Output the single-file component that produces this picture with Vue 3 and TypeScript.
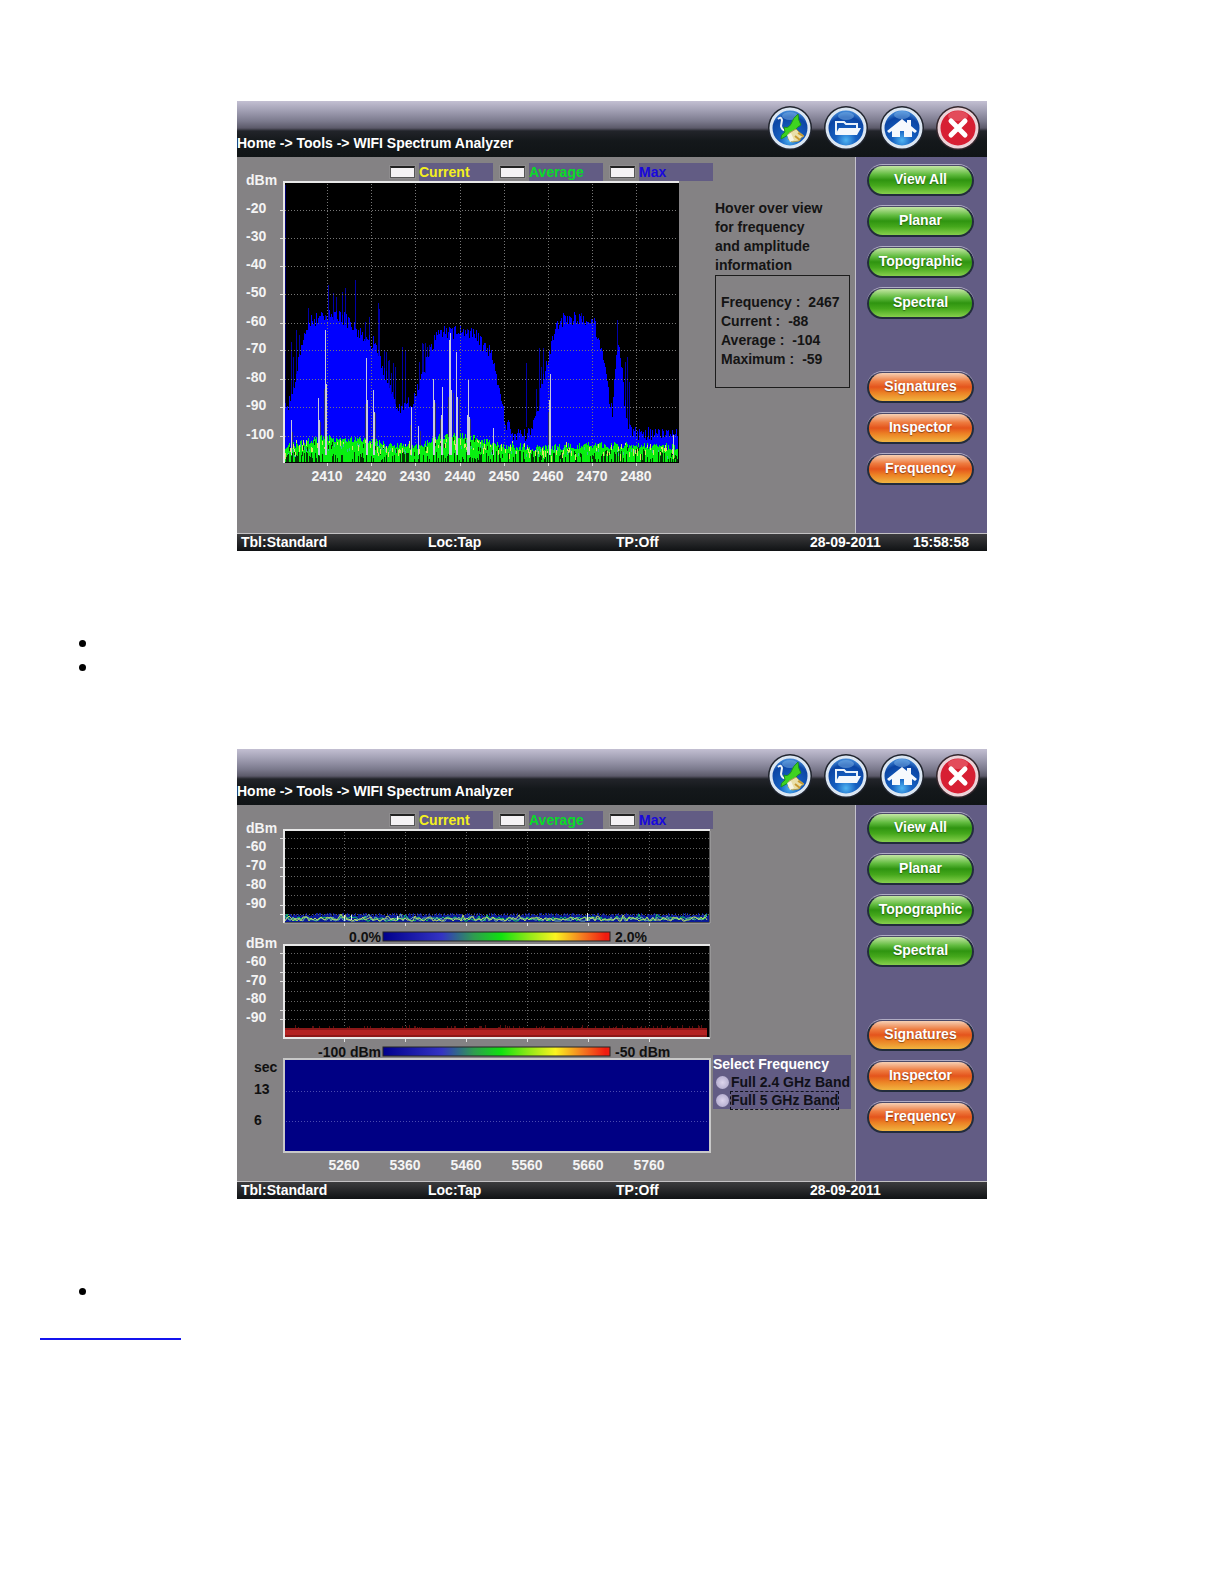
<script setup lang="ts">
interface SideButton {
  label: string
  tone: 'green' | 'orange'
}

interface Tick {
  pos: number
  label: string
}

type Point = [number, number]

const greenButtons: SideButton[] = ['View All', 'Planar', 'Topographic', 'Spectral'].map((label) => ({ label, tone: 'green' }))
const orangeButtons: SideButton[] = ['Signatures', 'Inspector', 'Frequency'].map((label) => ({ label, tone: 'orange' }))

const legend = [
  { name: 'Current', cls: 'current' },
  { name: 'Average', cls: 'average' },
  { name: 'Max', cls: 'max' },
]

const readings = [
  { name: 'Frequency', value: '2467' },
  { name: 'Current', value: '-88' },
  { name: 'Average', value: '-104' },
  { name: 'Maximum', value: '-59' },
]

const screens = [
  { id: 'wide', time: '15:58:58' },
  { id: 'dual', time: '' },
]

/* Small repeatable generator, so the noise floor is stable between renders. */
function makeRandom(seed: number): () => number {
  let s = seed
  return () => {
    s = (s * 1664525 + 1013904223) % 4294967296
    return s / 4294967296
  }
}

function interpolate(points: Point[], x: number): number {
  for (let i = 1; i < points.length; i++) {
    if (x <= points[i][0]) {
      const [x0, y0] = points[i - 1]
      const [x1, y1] = points[i]
      return y0 + ((y1 - y0) * (x - x0)) / (x1 - x0)
    }
  }
  return points[points.length - 1][1]
}

/* 2.4 GHz view */
const bandRows: Tick[] = [53, 81, 109, 137, 166, 193, 222, 250, 279].map((pos, i) => ({ pos, label: String(-20 - i * 10) }))
const bandCols: Tick[] = [90, 134, 178, 223, 267, 311, 355, 399].map((pos, i) => ({ pos, label: String(2410 + i * 10) }))

const envelope: Point[] = [
  [48, 249], [54, 243], [58, 222], [64, 187], [70, 167], [80, 162], [94, 157], [103, 160], [110, 164], [117, 171],
  [126, 180], [140, 189], [145, 210], [150, 224], [156, 243], [163, 251], [170, 243], [175, 246], [183, 226],
  [190, 203], [199, 178], [206, 175], [223, 176], [239, 178], [246, 190], [253, 195], [258, 216], [265, 243],
  [268, 266], [276, 276], [293, 277], [301, 250], [306, 220], [313, 193], [318, 173], [325, 163], [346, 161],
  [356, 165], [361, 180], [366, 203], [371, 236], [375, 256], [378, 206], [381, 186], [384, 203], [387, 243],
  [391, 266], [396, 276], [441, 278],
]
const faintSpikes: Point[] = [
  [118, 123], [96, 136], [91, 128], [108, 131], [105, 135], [141, 146], [71, 151], [54, 185], [59, 173], [132, 160],
  [165, 190], [168, 193], [152, 203], [156, 206], [185, 186], [192, 188], [289, 206], [302, 191], [306, 191],
  [380, 163], [390, 200], [217, 173], [230, 172], [337, 156], [344, 156], [99, 140], [149, 195], [151, 204],
  [147, 193], [154, 216], [158, 210], [186, 187], [188, 186], [190, 190], [182, 205], [142, 152], [128, 165],
  [56, 200], [62, 178], [84, 155], [88, 158], [171, 240], [304, 210], [299, 232], [392, 225], [388, 205],
]
const currentSpikes: Point[] = [
  [54, 263], [81, 241], [82, 263], [88, 173], [89, 227], [129, 201], [130, 243], [136, 233], [137, 255], [174, 250],
  [181, 269], [196, 222], [197, 243], [205, 230], [204, 258], [212, 183], [213, 176], [214, 233], [219, 195],
  [220, 240], [230, 258], [231, 223], [232, 260], [256, 271], [313, 217], [312, 243], [436, 278],
]
const shadeSpikes: Point[] = [
  [83, 265], [87, 232], [128, 247], [138, 256], [173, 268], [198, 246], [203, 262], [211, 240], [216, 236], [222, 242],
  [233, 262], [311, 255], [183, 274], [55, 275],
]
const averageTop: Point[] = [
  [48, 290], [70, 284], [90, 281], [130, 283], [150, 288], [180, 289], [200, 281], [220, 279], [240, 281], [258, 288],
  [300, 291], [350, 288], [441, 290],
]

const rnd = makeRandom(71)
const maxFill: string[] = []
const avgFill: string[] = []
const darkMarks: string[] = []
const yellowMarks: string[] = []
const cyanMarks: string[] = []
for (let x = 48; x < 441; x++) {
  const peak = interpolate(envelope, x) + (rnd() - 0.5) * 14
  maxFill.push(`M${x} ${Math.round(peak)}V305`)
  const avg = interpolate(averageTop, x) + (rnd() - 0.5) * 7
  avgFill.push(`M${x} ${Math.round(avg)}V305`)
  if (rnd() < 0.42) darkMarks.push(`M${x} ${Math.round(305 - 2 - rnd() * 9)}V305`)
  if (rnd() < 0.36) {
    const top = Math.max(avg - 2, 282) + rnd() * 9
    yellowMarks.push(`M${x} ${Math.round(top)}v${Math.round(2 + rnd() * 5)}`)
  }
  if (rnd() < 0.2) {
    const top = avg + 1 + rnd() * 7
    cyanMarks.push(`M${x} ${Math.round(top)}v3`)
  }
  if (rnd() < 0.18) darkMarks.push(`M${x} ${Math.round(avg + 2 + rnd() * 6)}v4`)
}
const maxPath = maxFill.join('')
const avgPath = avgFill.join('')
const darkPath = darkMarks.join('')
const yellowPath = yellowMarks.join('')
const cyanPath = cyanMarks.join('')
const faintPath = faintSpikes.map(([x, y]) => `M${x} ${y}V270`).join('')
const spikePath = currentSpikes.map(([x, y]) => `M${x} ${y}V298`).join('')
const shadePath = shadeSpikes.map(([x, y]) => `M${x} ${y}V296`).join('')

/* 5 GHz view */
const wideCols: Tick[] = [107, 168, 229, 290, 351, 412].map((pos, i) => ({ pos, label: String(5260 + i * 100) }))
const traceRows = [33, 43, 53, 62, 71, 81, 90, 100, 109]
const densityRows = [148, 158, 167, 176, 186, 196, 205, 214]
const traceLabels: Tick[] = [42, 61, 80, 99].map((pos, i) => ({ pos, label: String(-60 - i * 10) }))
const densityLabels: Tick[] = [157, 176, 194, 213].map((pos, i) => ({ pos, label: String(-60 - i * 10) }))

function floorTrace(seed: number, base: number, swing: number): string {
  const next = makeRandom(seed)
  const parts: string[] = []
  for (let x = 48; x < 471; x += 2) {
    const kick = next() < 0.06 ? 3 : 0
    parts.push(`${x},${Math.round(base + (next() - 0.5) * swing - kick)}`)
  }
  return parts.join(' ')
}
const greenFloor = floorTrace(12, 114, 4)
const yellowFloor = floorTrace(40, 114, 4)
const whiteFloor = floorTrace(95, 114, 5)

const next5 = makeRandom(33)
const blueFloor = Array.from({ length: 424 }, (_, i) => `M${48 + i} ${Math.round(108 + next5() * 3)}V117`).join('')
const redSpecks = Array.from({ length: 110 }, () => `M${Math.round(48 + next5() * 418)} ${Math.round(220 + next5() * 3)}v3`).join('')
</script>

<template>
  <main class="page">
    <template v-for="screen in screens" :key="screen.id">
      <section class="device">
        <header class="topbar">
          <p class="crumbs">Home -&gt; Tools -&gt; WIFI Spectrum Analyzer</p>
          <nav class="actions">
            <button type="button" class="round" aria-label="Connect">
              <svg viewBox="0 0 44 44">
                <defs>
                  <radialGradient :id="screen.id + '-blue'" cx="50%" cy="82%" r="76%">
                    <stop offset="0" stop-color="#4fb4f2" />
                    <stop offset="0.35" stop-color="#155fc0" />
                    <stop offset="0.8" stop-color="#0b45a4" />
                    <stop offset="1" stop-color="#3f86d6" />
                  </radialGradient>
                </defs>
                <circle cx="22" cy="22" r="22" fill="#20242e" />
                <circle cx="22" cy="22" r="19" :fill="`url(#${screen.id}-blue)`" stroke="#dbe6f2" stroke-width="3" />
                <ellipse cx="22" cy="10" rx="8" ry="4" fill="#7fb5ea" opacity="0.5" />
                <path d="M10 13q3-3 4 1l-1 6q1 5 6 4" fill="none" stroke="#f2f5f8" stroke-width="2" />
                <path d="M16 21q4 2 7-3 2-6 7-10 0 6 3 11-4 2-6 5l-7 5-7 4q-1-4 4-7z" fill="#3ed321" stroke="#1c8f1e" stroke-width="1" />
                <path d="M21 27l7-4 3 3 5 4-3 2-2 3-7 1-4-3z" fill="#e9dfa9" stroke="#a89a55" stroke-width="1" />
                <path d="M30 27l5 3M27 30l5 4" stroke="#c89a32" stroke-width="2" />
                <path d="M19 29l4-2 3 7-4 2z" fill="#f6f4e4" />
              </svg>
            </button>
            <button type="button" class="round" aria-label="Open">
              <svg viewBox="0 0 44 44">
                <circle cx="22" cy="22" r="22" fill="#20242e" />
                <circle cx="22" cy="22" r="19" :fill="`url(#${screen.id}-blue)`" stroke="#dbe6f2" stroke-width="3" />
                <ellipse cx="22" cy="10" rx="8" ry="4" fill="#7fb5ea" opacity="0.5" />
                <path d="M12 28V16h8l2 2h11v4" fill="none" stroke="#e9f2fb" stroke-width="2" />
                <path d="M11 29l4-7h22l-4 7z" fill="#f3f7fc" />
              </svg>
            </button>
            <button type="button" class="round" aria-label="Home">
              <svg viewBox="0 0 44 44">
                <circle cx="22" cy="22" r="22" fill="#20242e" />
                <circle cx="22" cy="22" r="19" :fill="`url(#${screen.id}-blue)`" stroke="#dbe6f2" stroke-width="3" />
                <ellipse cx="22" cy="9" rx="8" ry="4" fill="#7fb5ea" opacity="0.5" />
                <path d="M22 13l5 4v-3h4v6l6 5-2 2-3-2v6h-8v-6h-4v6h-8v-6l-3 2-2-2z" fill="#f6f9fd" />
              </svg>
            </button>
            <button type="button" class="round" aria-label="Close">
              <svg viewBox="0 0 44 44">
                <circle cx="22" cy="22" r="22" fill="#33262c" />
                <circle cx="22" cy="22" r="19" fill="#d71f33" stroke="#ecd3d8" stroke-width="3" />
                <ellipse cx="22" cy="10" rx="10" ry="5" fill="#ef7a84" opacity="0.5" />
                <path d="M15 15l14 14M29 15L15 29" stroke="#fff" stroke-width="5" stroke-linecap="round" />
              </svg>
            </button>
          </nav>
        </header>

        <div class="body">
          <div class="workspace">
            <div class="chart-col">
              <div class="legend">
                <label v-for="item in legend" :key="item.name" class="legend-item">
                  <input type="checkbox" class="swatch" />
                  <span :class="['legend-name', item.cls]">{{ item.name }}</span>
                </label>
              </div>

              <svg v-if="screen.id === 'wide'" class="chart" viewBox="0 24 476 352">
                <rect x="48" y="26" width="394" height="280" fill="#000" />
                <path :d="faintPath" class="bars" stroke="#0000a8" />
                <path d="M48 28V250" class="bars" stroke="#000070" />
                <path :d="maxPath" class="bars" stroke="#0000ff" />
                <g class="grid">
                  <path v-for="row in bandRows" :key="row.pos" :d="`M48 ${row.pos}H441`" />
                  <path v-for="col in bandCols" :key="col.pos" :d="`M${col.pos} 27V305`" />
                </g>
                <path :d="shadePath" class="bars" stroke="#30306c" />
                <path :d="avgPath" class="bars" stroke="#08ee10" />
                <path :d="cyanPath" class="bars" stroke="#35b8a0" />
                <path :d="darkPath" class="bars" stroke="#063a06" />
                <path :d="yellowPath" class="bars" stroke="#d8e85c" />
                <path :d="spikePath" class="bars" stroke="#c8c8dc" />
                <path d="M442 25H47V306" class="frame" />
                <path d="M441 26V306" class="bars" stroke="#000" />
                <g class="ticks">
                  <path v-for="row in bandRows" :key="row.pos" :d="`M43 ${row.pos}h4`" />
                  <path v-for="col in bandCols" :key="col.pos" :d="`M${col.pos} 306v3`" />
                </g>
                <g class="axis">
                  <text x="9" y="28">dBm</text>
                  <text v-for="row in bandRows" :key="row.pos" x="9" :y="row.pos + 3">{{ row.label }}</text>
                </g>
                <g class="axis mid">
                  <text v-for="col in bandCols" :key="col.pos" :x="col.pos" y="324">{{ col.label }}</text>
                </g>
              </svg>

              <svg v-else class="chart" viewBox="0 24 476 352">
                <defs>
                  <linearGradient id="heat">
                    <stop offset="0" stop-color="#00008c" />
                    <stop offset="0.26" stop-color="#3434c4" />
                    <stop offset="0.4" stop-color="#2f9c50" />
                    <stop offset="0.52" stop-color="#10e010" />
                    <stop offset="0.64" stop-color="#8ee818" />
                    <stop offset="0.76" stop-color="#fbf320" />
                    <stop offset="0.88" stop-color="#f47a20" />
                    <stop offset="0.98" stop-color="#f01c10" />
                  </linearGradient>
                </defs>
                <rect x="48" y="26" width="425" height="92" fill="#000" />
                <rect x="48" y="140" width="425" height="93" fill="#000" />
                <path :d="blueFloor" class="bars" stroke="#0a1a96" />
                <polyline :points="greenFloor" class="trace" stroke="#12c860" />
                <polyline :points="whiteFloor" class="trace" stroke="#6cb0a8" />
                <polyline :points="yellowFloor" class="trace" stroke="#b8dc60" />
                <path d="M350 108v8M107 110v6M160 111v4M114 110v5" class="bars" stroke="#e8f0e8" />
                <path :d="redSpecks" class="bars" stroke="#5c1010" />
                <rect x="48" y="223" width="422" height="9" fill="#8c1818" />
                <rect x="48" y="225" width="422" height="5" fill="#b42222" />
                <g class="grid dim">
                  <path v-for="y in traceRows" :key="y" :d="`M48 ${y}H472`" />
                  <path v-for="y in densityRows" :key="y" :d="`M48 ${y}H472`" />
                  <path v-for="col in wideCols" :key="col.pos" :d="`M${col.pos} 27V108M${col.pos} 142V222`" />
                </g>
                <path d="M473 25H47V118M473 140H47V233H473" class="frame" />
                <path d="M473 26V118M473 141V233M47 118H473" class="frame thin" />
                <g class="ticks">
                  <path v-for="y in [33, 62, 71, 100, 109, 148, 167, 176, 205, 214]" :key="y" :d="`M43 ${y}h4`" />
                  <path v-for="col in wideCols" :key="col.pos" :d="`M${col.pos} 118v3M${col.pos} 234v3`" />
                </g>
                <rect x="146" y="127" width="227" height="9" fill="url(#heat)" stroke="#242424" />
                <rect x="146" y="242" width="227" height="9" fill="url(#heat)" stroke="#242424" />
                <rect x="47" y="254" width="426" height="93" fill="#000084" stroke="#c8c8c8" stroke-width="2" />
                <path d="M49 286H472M49 316H472" class="faint-grid" />
                <g class="axis">
                  <text x="9" y="28">dBm</text>
                  <text v-for="t in traceLabels" :key="t.pos" x="9" :y="t.pos + 4">{{ t.label }}</text>
                  <text x="9" y="143">dBm</text>
                  <text v-for="t in densityLabels" :key="t.pos" x="9" :y="t.pos + 4">{{ t.label }}</text>
                </g>
                <g class="axis mid">
                  <text v-for="col in wideCols" :key="col.pos" :x="col.pos" y="365">{{ col.label }}</text>
                </g>
                <g class="axis dark">
                  <text x="112" y="137">0.0%</text>
                  <text x="378" y="137">2.0%</text>
                  <text x="81" y="252">-100 dBm</text>
                  <text x="378" y="252">-50 dBm</text>
                  <text x="17" y="267">sec</text>
                  <text x="17" y="289">13</text>
                  <text x="17" y="320">6</text>
                </g>
              </svg>
            </div>

            <aside v-if="screen.id === 'wide'" class="info">
              <p>Hover over view<br />for frequency<br />and amplitude<br />information</p>
              <dl class="readings">
                <div v-for="r in readings" :key="r.name" class="reading">
                  <dt>{{ r.name }} :</dt>
                  <dd>{{ r.value }}</dd>
                </div>
              </dl>
            </aside>
            <aside v-else class="picker-col">
              <fieldset class="picker">
                <legend class="picker-title">Select Frequency</legend>
                <label class="choice"><input type="radio" name="band" class="dot" /><span>Full 2.4 GHz Band</span></label>
                <label class="choice"><input type="radio" name="band" class="dot" /><span class="focused">Full 5 GHz Band</span></label>
              </fieldset>
            </aside>
          </div>

          <div class="sidebar">
            <div class="stack">
              <button v-for="b in greenButtons" :key="b.label" type="button" :class="['pill', b.tone]">{{ b.label }}</button>
            </div>
            <div class="stack">
              <button v-for="b in orangeButtons" :key="b.label" type="button" :class="['pill', b.tone]">{{ b.label }}</button>
            </div>
          </div>
        </div>

        <footer class="status">
          <span>Tbl:Standard</span>
          <span>Loc:Tap</span>
          <span>TP:Off</span>
          <span>28-09-2011</span>
          <span>{{ screen.time }}</span>
        </footer>
      </section>

      <ul class="notes">
        <li></li>
        <li v-if="screen.id === 'wide'"></li>
      </ul>
    </template>
    <a class="more" href="#"></a>
  </main>
</template>

<style>
body {
  margin: 0;
  background: #fff;
}
</style>

<style scoped>
.page {
  padding: 101px 40px 0;
  font-family: 'Liberation Sans', Arial, sans-serif;
}
.device {
  max-width: 750px;
  margin: 0 auto;
  background: #848284;
  color: #fff;
  font-size: 14px;
  font-weight: 700;
}
.topbar {
  display: flex;
  justify-content: space-between;
  height: 56px;
  background: linear-gradient(#c3bfd2 0, #a09eb2 10px, #7c7b8e 20px, #5c5a6a 27px, #22242a 30px, #14181b 40px, #101416 56px);
}
.crumbs {
  align-self: flex-end;
  margin: 0 0 4px;
  line-height: 20px;
}
.actions {
  display: flex;
  gap: 12px;
  padding: 5px 7px 0 0;
}
.round {
  width: 44px;
  height: 44px;
  padding: 0;
  border: 0;
  background: none;
}
.round svg {
  display: block;
}
.body {
  display: grid;
  grid-template-columns: 618fr 132fr;
}
.workspace {
  display: grid;
  grid-template-columns: minmax(0, 476fr) minmax(0, 142fr);
}
.legend {
  display: flex;
  justify-content: flex-end;
  gap: 7px;
  padding-top: 6px;
}
.legend-item {
  display: flex;
  align-items: center;
  gap: 4px;
}
.swatch {
  appearance: none;
  width: 25px;
  height: 12px;
  margin: 0;
  border: 1px solid #555;
  border-top: 2px solid #222;
  background: #f4f2f4;
  outline: 1px solid #8e8c8e;
}
.legend-name {
  width: 74px;
  line-height: 18px;
  background: #625c84;
}
.current {
  color: #f4f020;
}
.average {
  color: #08dc28;
}
.max {
  color: #1808dc;
}
.chart {
  display: block;
  width: 100%;
  overflow: visible;
}
.bars,
.trace {
  fill: none;
  stroke-width: 1;
}
.bars {
  transform: translateX(0.5px);
}
.grid path {
  stroke: #777;
  stroke-dasharray: 1 2;
  shape-rendering: crispEdges;
}
.dim path {
  stroke: #666;
}
.faint-grid {
  stroke: #4a4ab0;
  stroke-dasharray: 1 2;
  shape-rendering: crispEdges;
}
.frame {
  fill: none;
  stroke: #e8e8e8;
  stroke-width: 2;
}
.thin {
  stroke: #aaa;
  stroke-width: 1;
}
.ticks path {
  stroke: #e0e0e0;
  shape-rendering: crispEdges;
}
.axis {
  fill: #f4f4f4;
  font-size: 14px;
}
.mid {
  text-anchor: middle;
}
.dark {
  fill: #101010;
}
.info {
  padding: 42px 5px 0 2px;
  color: #141414;
  line-height: 19px;
}
.info p {
  margin: 0;
}
.readings {
  margin: 0;
  padding: 17px 5px 18px;
  border: 1px solid #1c1c1c;
}
.reading {
  display: flex;
  gap: 8px;
}
.reading dd {
  margin: 0;
}
.picker-col {
  padding: 250px 4px 0 0;
}
.picker {
  min-width: 0;
  margin: 0;
  padding: 0;
  border: 0;
  background: #625c84;
  color: #101018;
  white-space: nowrap;
}
.picker-title {
  float: left;
  width: 100%;
  padding: 0;
  line-height: 18px;
  color: #fff;
}
.choice {
  display: flex;
  clear: both;
  align-items: center;
  gap: 2px;
  padding-left: 3px;
  line-height: 19px;
}
.dot {
  appearance: none;
  flex: none;
  width: 13px;
  height: 13px;
  margin: 0;
  border-radius: 50%;
  background: radial-gradient(#dcd4ec, #a9a2c6);
}
.focused {
  line-height: 17px;
  outline: 1px dashed #101018;
}
.sidebar {
  display: flex;
  flex-direction: column;
  gap: 53px;
  padding: 8px 13px 0 11px;
  border-left: 1px solid #c4c2cc;
  background: #625c84;
}
.stack {
  display: flex;
  flex-direction: column;
  gap: 10px;
}
.pill {
  height: 31px;
  padding: 0 0 3px;
  border: 2px solid #222c3c;
  border-top: 1px solid #4c4a68;
  border-radius: 16px;
  box-shadow: 0 -1px 0 #b0acc4;
  color: #fff;
  font: inherit;
  line-height: 20px;
  text-shadow: 0 1px 1px rgba(0, 0, 0, 0.4);
}
.green {
  background: linear-gradient(#c4e6a4 0, #62bc40 30%, #2f9410 50%, #45a81c 70%, #86cf4c 100%);
}
.orange {
  background: linear-gradient(#f6d0b4 0, #ee7c40 30%, #e4541c 50%, #ec8024 70%, #f0b440 100%);
}
.status {
  display: grid;
  grid-template-columns: 187fr 188fr 194fr 103fr 74fr;
  padding-left: 4px;
  border-top: 1px solid #c4c2c4;
  background: linear-gradient(#3c3c3e, #101214);
  line-height: 17px;
}
.notes {
  margin: 79px 0 71px;
  padding-left: 60px;
  font-size: 24px;
  line-height: 24px;
}
.notes:last-of-type {
  margin-bottom: 36px;
}
.more {
  display: block;
  width: 141px;
  border-bottom: 2px solid #1414ee;
}
</style>
